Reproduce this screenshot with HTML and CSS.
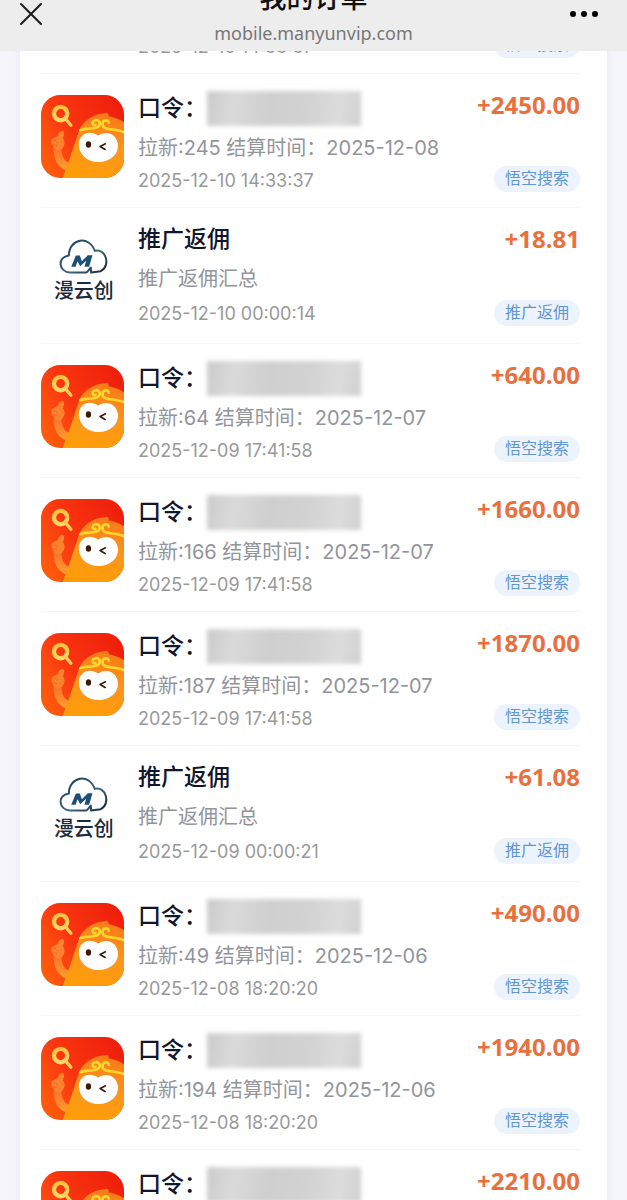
FILE: index.html
```html
<!DOCTYPE html>
<html lang="zh-CN">
<head>
  <meta charset="UTF-8" />
  <meta name="viewport" content="width=device-width, initial-scale=1" />
  <title>我的订单</title>
  <link rel="stylesheet" href="styles.css">
</head>
<body>

  <!-- Shared icons -->
  <svg class="sprite" aria-hidden="true">
    <defs>
      <linearGradient id="appBg" x1="0" y1="0.7" x2="1" y2="0.2">
        <stop offset="0" stop-color="#ff5a0c" />
        <stop offset="0.4" stop-color="#f93510" />
        <stop offset="1" stop-color="#ee1f0c" />
      </linearGradient>
      <linearGradient id="appBody" x1="0.6" y1="0" x2="0.4" y2="1">
        <stop offset="0" stop-color="#f97a18" />
        <stop offset="0.5" stop-color="#fb951c" />
        <stop offset="1" stop-color="#ff9d08" />
      </linearGradient>
      <linearGradient id="appArm" x1="0" y1="0" x2="0" y2="1">
        <stop offset="0" stop-color="#f8702a" />
        <stop offset="1" stop-color="#ff9a30" />
      </linearGradient>
      <linearGradient id="gold" x1="0" y1="0" x2="0" y2="1">
        <stop offset="0" stop-color="#ffc03c" />
        <stop offset="1" stop-color="#ffd768" />
      </linearGradient>
      <linearGradient id="cloudLine" x1="0" y1="0" x2="1" y2="1">
        <stop offset="0" stop-color="#123a55" />
        <stop offset="0.6" stop-color="#3f6680" />
        <stop offset="1" stop-color="#16202e" />
      </linearGradient>
      <clipPath id="appClip"><rect width="250" height="250" rx="58" /></clipPath>
    </defs>

    <symbol id="wukong" viewBox="0 0 250 250">
      <g clip-path="url(#appClip)">
        <rect width="250" height="250" fill="url(#appBg)" />
        <path d="M50 160 C49 190 60 212 90 220" fill="none" stroke="url(#appArm)" stroke-width="24" stroke-linecap="round" />
        <path d="M33 134 C38 126 46 129 51 121 C54 111 60 106 67 109 C73 113 68 124 66 131 C75 140 71 157 61 164 C49 171 38 165 36 153 C30 148 30 139 33 134Z" fill="#fb822e" />
        <path d="M40 137 L49 143 M37 150 L47 152" fill="none" stroke="#f06a26" stroke-width="3" stroke-linecap="round" />
        <path d="M65 250 C84 202 96 160 113 112 C122 82 154 57 192 55 C198 51 204 53 204 64 C225 68 242 75 250 83 V250Z" fill="url(#appBody)" />
        <path d="M118 106 C138 97 164 106 174 94 C183 82 169 70 158 79 C152 86 158 93 164 90" fill="none" stroke="#ffd52e" stroke-width="8" stroke-linecap="round" />
        <path d="M204 84 C202 71 184 75 185 89 C188 110 223 98 252 113" fill="none" stroke="#ffd52e" stroke-width="8" stroke-linecap="round" />
        <path d="M172 122 C145 104 114 118 114 150 C115 181 140 202 173 202 C207 202 232 181 232 153 C231 119 200 104 172 122Z" fill="#fff" />
        <ellipse cx="143" cy="149" rx="8" ry="10" fill="#3b190b" />
        <path d="M194 147 L178 155 L193 164" fill="none" stroke="#3b190b" stroke-width="5" stroke-linecap="round" stroke-linejoin="round" />
        <circle cx="59" cy="56" r="20" fill="none" stroke="url(#gold)" stroke-width="13" />
        <path d="M74 72 L90 91" stroke="#ffcb58" stroke-width="10" stroke-linecap="round" />
      </g>
    </symbol>

    <symbol id="manyun" viewBox="0 0 250 250">
      <path d="M138 131 H88 C52 130 48 84 84 80 C84 28 146 18 162 66 C194 56 212 110 180 127 L151 131 L150 116 L138 131" fill="none" stroke="url(#cloudLine)" stroke-width="6" stroke-linejoin="round" />
      <path d="M91 114 L105 80 H117 L123 97 L141 79 H155 L145 114 H131 L136 96 L118 112 L110 97 L104 114Z" fill="#1d4f75" />
      <text x="129" y="208" class="logo-text">漫云创</text>
    </symbol>
  </svg>

  <header class="topbar">
    <button type="button" class="icon-btn" aria-label="关闭">
      <svg width="24" height="24" viewBox="0 0 24 24"><path d="M2 2 L22 22 M22 2 L2 22" fill="none" stroke="#1c1c1c" stroke-width="2" stroke-linecap="round" /></svg>
    </button>
    <div class="heading">
      <h1>我的订单</h1>
      <p>mobile.manyunvip.com</p>
    </div>
    <button type="button" class="icon-btn more" aria-label="更多">
      <svg width="30" height="24" viewBox="0 0 30 24"><circle cx="4" cy="12" r="3" /><circle cx="15" cy="12" r="3" /><circle cx="26" cy="12" r="3" /></svg>
    </button>
  </header>

  <main>
    <ul class="orders">
      <li class="order">
        <svg class="logo"><use href="#wukong" /></svg>
        <div class="info">
          <h2>口令：<span class="mask"></span></h2>
          <p class="desc">拉新:245 结算时间：2025-12-08</p>
          <p class="time">2025-12-10 14:33:37</p>
        </div>
        <div class="side"><strong>+2450.00</strong><span class="tag">悟空搜索</span></div>
      </li>
      <li class="order">
        <svg class="logo"><use href="#wukong" /></svg>
        <div class="info">
          <h2>口令：<span class="mask"></span></h2>
          <p class="desc">拉新:245 结算时间：2025-12-08</p>
          <p class="time">2025-12-10 14:33:37</p>
        </div>
        <div class="side"><strong>+2450.00</strong><span class="tag">悟空搜索</span></div>
      </li>
      <li class="order rebate">
        <svg class="logo"><use href="#manyun" /></svg>
        <div class="info">
          <h2>推广返佣</h2>
          <p class="desc">推广返佣汇总</p>
          <p class="time">2025-12-10 00:00:14</p>
        </div>
        <div class="side"><strong>+18.81</strong><span class="tag">推广返佣</span></div>
      </li>
      <li class="order">
        <svg class="logo"><use href="#wukong" /></svg>
        <div class="info">
          <h2>口令：<span class="mask"></span></h2>
          <p class="desc">拉新:64 结算时间：2025-12-07</p>
          <p class="time">2025-12-09 17:41:58</p>
        </div>
        <div class="side"><strong>+640.00</strong><span class="tag">悟空搜索</span></div>
      </li>
      <li class="order">
        <svg class="logo"><use href="#wukong" /></svg>
        <div class="info">
          <h2>口令：<span class="mask"></span></h2>
          <p class="desc">拉新:166 结算时间：2025-12-07</p>
          <p class="time">2025-12-09 17:41:58</p>
        </div>
        <div class="side"><strong>+1660.00</strong><span class="tag">悟空搜索</span></div>
      </li>
      <li class="order">
        <svg class="logo"><use href="#wukong" /></svg>
        <div class="info">
          <h2>口令：<span class="mask"></span></h2>
          <p class="desc">拉新:187 结算时间：2025-12-07</p>
          <p class="time">2025-12-09 17:41:58</p>
        </div>
        <div class="side"><strong>+1870.00</strong><span class="tag">悟空搜索</span></div>
      </li>
      <li class="order rebate">
        <svg class="logo"><use href="#manyun" /></svg>
        <div class="info">
          <h2>推广返佣</h2>
          <p class="desc">推广返佣汇总</p>
          <p class="time">2025-12-09 00:00:21</p>
        </div>
        <div class="side"><strong>+61.08</strong><span class="tag">推广返佣</span></div>
      </li>
      <li class="order">
        <svg class="logo"><use href="#wukong" /></svg>
        <div class="info">
          <h2>口令：<span class="mask"></span></h2>
          <p class="desc">拉新:49 结算时间：2025-12-06</p>
          <p class="time">2025-12-08 18:20:20</p>
        </div>
        <div class="side"><strong>+490.00</strong><span class="tag">悟空搜索</span></div>
      </li>
      <li class="order">
        <svg class="logo"><use href="#wukong" /></svg>
        <div class="info">
          <h2>口令：<span class="mask"></span></h2>
          <p class="desc">拉新:194 结算时间：2025-12-06</p>
          <p class="time">2025-12-08 18:20:20</p>
        </div>
        <div class="side"><strong>+1940.00</strong><span class="tag">悟空搜索</span></div>
      </li>
      <li class="order">
        <svg class="logo"><use href="#wukong" /></svg>
        <div class="info">
          <h2>口令：<span class="mask"></span></h2>
        </div>
        <div class="side"><strong>+2210.00</strong></div>
      </li>
    </ul>
  </main>

</body>
</html>
```
FILE: styles.css
```css
/* Reset and base */
* {
  box-sizing: border-box;
}
body {
  margin: 0;
  height: 100vh;
  display: flex;
  flex-direction: column;
  overflow: hidden;
  background-color: #f5f5fb;
  color: #10162b;
  font-family: Inter, "Noto Sans CJK SC", sans-serif;
}
h1, h2, p, ul {
  margin: 0;
  padding: 0;
}
.sprite {
  position: absolute;
  width: 0;
  height: 0;
}

/* Top bar */
.topbar {
  flex: none;
  height: 51px;
  display: flex;
  justify-content: space-between;
  align-items: flex-end;
  padding: 0 19px;
  overflow: hidden;
  background-color: #ededed;
}
.icon-btn {
  width: 40px;
  height: 51px;
  padding: 0 0 25px;
  border: none;
  background: none;
  display: flex;
  align-items: flex-end;
}
.icon-btn.more {
  justify-content: flex-end;
  padding-right: 9px;
}
.icon-btn svg {
  flex: none;
}
.heading {
  text-align: center;
}
.heading h1 {
  font-size: 27px;
  line-height: 40px;
  font-weight: 500;
  color: #111;
}
.heading p {
  padding-bottom: 4px;
  font-family: "Noto Sans", sans-serif;
  font-size: 18px;
  line-height: 28px;
  color: #777;
}

/* Order list, scrolled part of a row under the bar */
main {
  flex: 1;
  min-height: 0;
  padding: 0 20px;
  overflow: hidden;
}
.orders {
  margin-top: -111px;
  padding: 0 27px 0 21px;
  list-style: none;
  background-color: #fff;
  box-shadow: 0 0 8px rgba(90, 90, 160, 0.08);
}
.order {
  display: flex;
  gap: 14px;
  padding: 17px 0 12px;
  border-bottom: 1px solid #f5f5f6;
}
.logo {
  flex: none;
  width: 83px;
  height: 83px;
  margin-top: 4px;
}
.logo-text {
  font-family: "Noto Sans CJK SC", sans-serif;
  font-size: 60px;
  font-weight: 500;
  fill: #1b2a3c;
  text-anchor: middle;
}
.info {
  flex: 1;
  white-space: nowrap;
}
.info h2 {
  display: flex;
  height: 35px;
  font-size: 23px;
  line-height: 34px;
  font-weight: 500;
}
.mask {
  width: 154px;
  height: 35px;
  background: linear-gradient(100deg, #cbcbcb, #dadada 18%, #cfcfcf 40%, #d2d2d2 65%, #dcdcdc 85%, #d0d0d0);
  filter: blur(2px);
}
.desc {
  margin-top: 7px;
  font-size: 20px;
  line-height: 30px;
  color: #92949b;
}
.time {
  margin-top: 4px;
  font-size: 18px;
  line-height: 28px;
  color: #999;
}
.side {
  display: flex;
  flex-direction: column;
  justify-content: space-between;
  align-items: flex-end;
  padding-bottom: 3px;
}
.side strong {
  font-family: "Open Sans", sans-serif;
  font-size: 24px;
  line-height: 28px;
  font-weight: 700;
  color: #e9703c;
}
.tag {
  padding: 0 11px 2px;
  border-radius: 13px;
  background-color: #edf3fd;
  font-size: 16px;
  line-height: 24px;
  color: #5f95d1;
}

/* Commission rows */
.rebate {
  padding-bottom: 15px;
}
.rebate .info h2 {
  height: 28px;
  line-height: 28px;
}
.rebate .desc {
  margin-top: 11px;
}
.rebate .time {
  margin-top: 6px;
}
.rebate .side {
  padding-bottom: 2px;
}
```
